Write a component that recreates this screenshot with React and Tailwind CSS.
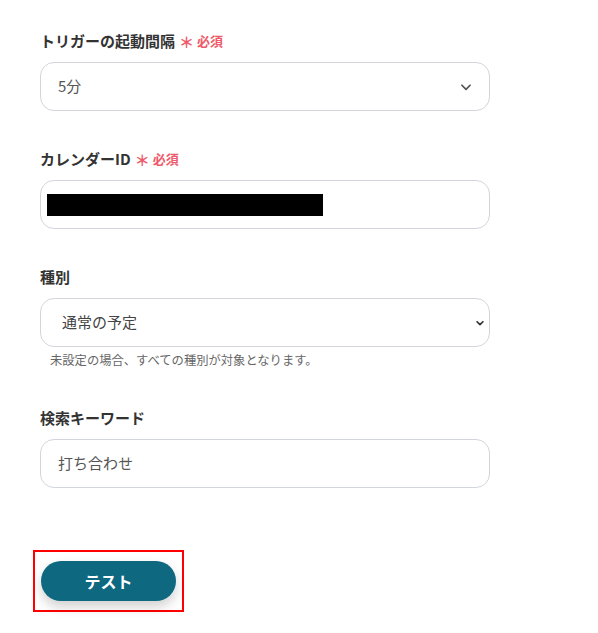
import React from 'react';

const font = { fontFamily: '"Noto Sans CJK JP", "Noto Sans", sans-serif' };

const Label = ({ children, required }) => (
  <div className="flex items-center h-6 mb-[9px]">
    <span className="text-[15px] font-bold text-[#333]">{children}</span>
    {required && (
      <span className="ml-[4px] flex items-center text-[13px] font-bold text-[#ee5a6a]">
        <span className="text-[15px] leading-none mr-[3px]">＊</span>
        必須
      </span>
    )}
  </div>
);

const Box = ({ children, className = '' }) => (
  <div className={`flex items-center w-[450px] h-[49px] border border-[#d3d5dc] rounded-[14px] bg-white ${className}`}>
    {children}
  </div>
);

const App = () => {
  return (
    <div className="w-[598px] h-[633px] bg-white relative" style={font}>
      <div className="pl-10 pt-[29px]">
        <Label required>トリガーの起動間隔</Label>
        <Box className="pl-[17px] pr-[16px] justify-between">
          <span className="text-[15px] text-[#555]">5分</span>
          <svg width="14" height="14" viewBox="0 0 24 24" fill="none" stroke="#555" strokeWidth="3" strokeLinecap="round" strokeLinejoin="round">
            <path d="M5 9l7 7 7-7" />
          </svg>
        </Box>

        <div className="mt-[36px]">
          <Label required>カレンダーID</Label>
          <Box className="pl-[6px]">
            <div className="w-[276px] h-[22px] bg-black" />
          </Box>
        </div>

        <div className="mt-[36px]">
          <Label>種別</Label>
          <Box className="pl-[21px] pr-[4px] justify-between">
            <span className="text-[15px] text-[#444]">通常の予定</span>
            <svg width="10" height="10" viewBox="0 0 24 24" fill="none" stroke="#333" strokeWidth="4" strokeLinecap="round" strokeLinejoin="round">
              <path d="M5 9l7 7 7-7" />
            </svg>
          </Box>
          <div className="mt-[4px] pl-[10px] text-[12.3px] leading-[18px] text-[#666]">未設定の場合、すべての種別が対象となります。</div>
        </div>

        <div className="mt-[37px]">
          <Label>検索キーワード</Label>
          <Box className="pl-[17px]">
            <span className="text-[15px] text-[#555]">打ち合わせ</span>
          </Box>
        </div>

        <div className="mt-[62px] ml-[-7px] w-[151px] h-[62px] border-2 border-[#ff0000] flex items-center justify-center">
          <button className="w-[135px] h-[40px] rounded-full bg-[#0e6880] text-white text-[16px] font-bold shadow-[0_6px_12px_rgba(0,0,0,0.18)]">
            テスト
          </button>
        </div>
      </div>
    </div>
  );
};

export default App;
